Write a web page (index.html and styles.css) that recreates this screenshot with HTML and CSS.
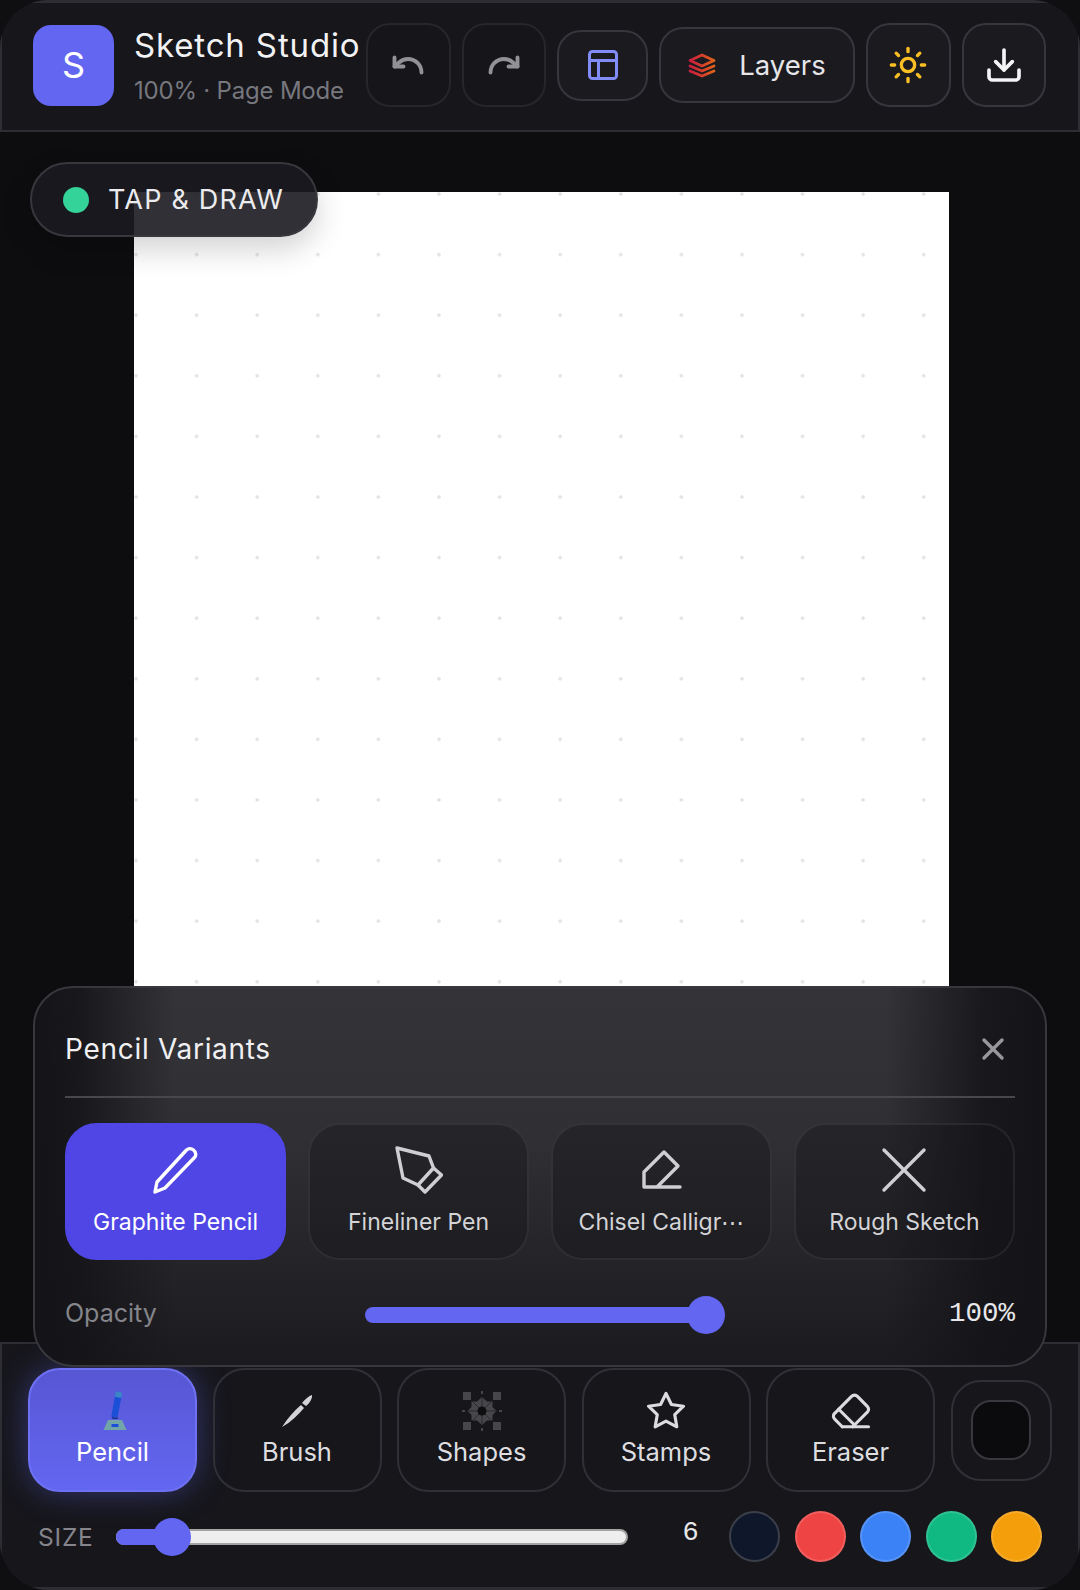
FILE: index.html
```html
<!DOCTYPE html>
<html>
<head>
  <meta charset="utf-8">
  <title>Sketch Studio</title>
  <link rel="stylesheet" href="styles.css">
</head>
<body>
  <div class="app">
    <header class="topbar">
      <div class="logo">S</div>
      <div class="brand">
        <div class="brand-title">Sketch Studio</div>
        <div class="brand-sub">100% · Page Mode</div>
      </div>
      <div class="actions">
        <button class="icon-btn is-disabled" type="button">
          <svg width="36" height="36" viewBox="0 0 24 24" class="ico" stroke="#929296" stroke-width="2.600"><path d="M3 7v6h6"/><path d="M21 17a9 9 0 0 0-9-9 9 9 0 0 0-6 2.3L3 13"/></svg>
        </button>
        <button class="icon-btn is-disabled" type="button">
          <svg width="36" height="36" viewBox="0 0 24 24" class="ico" stroke="#929296" stroke-width="2.600"><path d="M21 7v6h-6"/><path d="M3 17a9 9 0 0 1 9-9 9 9 0 0 1 6 2.3L21 13"/></svg>
        </button>
        <button class="icon-btn layout-btn" type="button">
          <svg width="36" height="36" viewBox="0 0 24 24" class="ico" stroke="#818cf8" stroke-width="2"><rect x="3" y="3" width="18" height="18" rx="2"/><path d="M3 9h18"/><path d="M9 21V9"/></svg>
        </button>
        <button class="layers-btn" type="button">
          <svg width="28" height="25" viewBox="0 0 28 25" class="ico" stroke="url(#layersGrad)" stroke-width="2.800">
            <defs>
              <linearGradient id="layersGrad" x1="0" y1="0" x2="1" y2="0">
                <stop offset="0" stop-color="#c91c3e"/>
                <stop offset="1" stop-color="#e0621a"/>
              </linearGradient>
            </defs>
            <path d="M14 2 26 7.500 14 13 2 7.500z"/>
            <path d="M2 13l12 5 12-5"/>
            <path d="M2 18l12 5 12-5"/>
          </svg>
          <span>Layers</span>
        </button>
        <button class="icon-btn" type="button">
          <svg width="40" height="40" viewBox="0 0 24 24" class="ico" stroke="#fbbf24" stroke-width="2"><circle cx="12" cy="12" r="4"/><path d="M12 2v2"/><path d="M12 20v2"/><path d="M4.9 4.9l1.4 1.4"/><path d="M17.7 17.7l1.4 1.4"/><path d="M2 12h2"/><path d="M20 12h2"/><path d="M6.3 17.7l-1.4 1.4"/><path d="M19.1 4.9l-1.4 1.4"/></svg>
        </button>
        <button class="icon-btn" type="button">
          <svg width="40" height="40" viewBox="0 0 24 24" class="ico" stroke="#f4f4f6" stroke-width="2.200"><path d="M21 15v4a2 2 0 0 1-2 2H5a2 2 0 0 1-2-2v-4"/><path d="M7 10l5 5 5-5"/><path d="M12 15V3"/></svg>
        </button>
      </div>
    </header>

    <main class="stage">
      <div class="mode-pill">
        <span class="mode-dot"></span>
        <span>TAP &amp; DRAW</span>
      </div>
      <div class="paper"></div>
    </main>

    <section class="variants">
      <div class="variants-head">
        <span class="variants-title">Pencil Variants</span>
        <svg width="24" height="24" viewBox="0 0 24 24" class="ico" stroke="#97979c" stroke-width="3.400"><path d="M3 3l18 18"/><path d="M21 3L3 21"/></svg>
      </div>
      <div class="variant-grid">
        <div class="variant is-active">
          <svg width="48" height="48" viewBox="0 0 48 48" class="ico" stroke="#fff" stroke-width="3.400"><path d="M3 46l2-10L34 4.500c2-2 5-2.500 7.500-.5s3 5.500 1 7.500L13 42z"/></svg>
          <span class="variant-label">Graphite Pencil</span>
        </div>
        <div class="variant">
          <svg width="48" height="48" viewBox="0 0 48 48" class="ico" stroke="#cfcfd1" stroke-width="3.400"><path d="M2 2l32 8 4.500 12L23 39 8 32z"/><path d="M38.500 22l8 7L30 46l-7-7"/></svg>
          <span class="variant-label">Fineliner Pen</span>
        </div>
        <div class="variant">
          <svg width="48" height="48" viewBox="0 0 48 48" class="ico" stroke="#cfcfd1" stroke-width="3.400"><path d="M42 41H6V26L26 6l14 14-21 21"/></svg>
          <span class="variant-label">Chisel Calligr⋯</span>
        </div>
        <div class="variant">
          <svg width="48" height="48" viewBox="0 0 48 48" class="ico" stroke="#cfcfd1" stroke-width="3.400"><path d="M3 4l40 40"/><path d="M43 4L3 44"/></svg>
          <span class="variant-label">Rough Sketch</span>
        </div>
      </div>
      <div class="opacity-row">
        <span class="opacity-label">Opacity</span>
        <div class="opacity-slider"><span class="opacity-thumb"></span></div>
        <span class="opacity-value">100%</span>
      </div>
    </section>

    <footer class="toolbar">
      <div class="tools">
        <div class="tool is-active">
          <svg width="42" height="42" viewBox="0 0 42 42" class="tool-icon">
            <path d="M19.500 25l4-22c.400-2 6.500-2 6.500 1l-4 21c-1 4-7.500 4-6.500 0z" fill="#1c4fd8"/>
            <path d="M23.500 3c.400-2 6.500-2 6.500 1l-.700 4-6.500-1.200z" fill="#3d86c6"/>
            <path d="M20 26c1 2.500 5 2.500 6 0l-.500 3h-5z" fill="#1a2f7a"/>
            <path d="M16 30h14l4.500 10h-23z" fill="#73a5a8"/>
            <rect x="19.500" y="34" width="7" height="3" fill="#1c4fd8"/>
          </svg>
          <span class="tool-label">Pencil</span>
        </div>
        <div class="tool">
          <svg width="42" height="42" viewBox="0 0 42 42" class="tool-icon" fill="#d4d4d6">
            <path d="M6 37c5-8 12-16 19-22l3 3c-6 7-13 14-22 19z"/>
            <path d="M26 13c3-4 7-7 10-8 .500 3-2 8-6 11z"/>
          </svg>
          <span class="tool-label">Brush</span>
        </div>
        <div class="tool">
          <svg width="42" height="42" viewBox="0 0 42 42" class="tool-icon">
            <g fill="#47474b">
              <rect x="2" y="2" width="8" height="8"/>
              <rect x="32" y="2" width="8" height="8"/>
              <rect x="2" y="32" width="8" height="8"/>
              <rect x="32" y="32" width="8" height="8"/>
              <path d="M21 7l5 4.500h5.500V17l4 4-4 4v5.500H26L21 35l-5-4.500h-5.500V25l-4-4 4-4v-5.500H16z"/>
              <rect x="20" y="1" width="2" height="3"/>
              <rect x="20" y="38" width="2" height="3"/>
              <rect x="1" y="20" width="3" height="2"/>
              <rect x="38" y="20" width="3" height="2"/>
            </g>
            <path d="M21 7v28M7 21h28M11 11l20 20M31 11L11 31" stroke="#2a2a2e" stroke-width="1"/>
            <circle cx="21" cy="21" r="4.500" fill="#0e0e11"/>
          </svg>
          <span class="tool-label">Shapes</span>
        </div>
        <div class="tool">
          <svg width="42" height="42" viewBox="0 0 24 24" class="ico tool-icon" stroke="#dcdcde" stroke-width="1.800"><path d="M12 2l3.090 6.260L22 9.270l-5 4.870 1.180 6.880L12 17.770l-6.180 3.250L7 14.140 2 9.270l6.910-1.010z"/></svg>
          <span class="tool-label">Stamps</span>
        </div>
        <div class="tool">
          <svg width="42" height="42" viewBox="0 0 24 24" class="ico tool-icon" stroke="#dcdcde" stroke-width="1.800"><path d="M7 21l-4.300-4.300c-1-1-1-2.500 0-3.400l9.600-9.600c1-1 2.500-1 3.400 0l5.600 5.600c1 1 1 2.500 0 3.400L13 21"/><path d="M22 21H7"/><path d="M5 11l9 9"/></svg>
          <span class="tool-label">Eraser</span>
        </div>
        <div class="current-color"><span class="current-chip"></span></div>
      </div>
      <div class="size-row">
        <span class="size-label">SIZE</span>
        <div class="size-slider">
          <span class="size-fill"></span>
          <span class="size-thumb"></span>
        </div>
        <span class="size-value">6</span>
        <div class="swatches">
          <span class="swatch swatch-ink"></span>
          <span class="swatch swatch-red"></span>
          <span class="swatch swatch-blue"></span>
          <span class="swatch swatch-green"></span>
          <span class="swatch swatch-amber"></span>
        </div>
      </div>
    </footer>
  </div>
</body>
</html>
```

FILE: styles.css
```css
* {
  box-sizing: border-box;
}

html,
body {
  margin: 0;
  background: #0f0f12;
}

body {
  font-family: Inter, "Liberation Sans", sans-serif;
  color: #e8e8ea;
}

button {
  font: inherit;
  color: inherit;
  padding: 0;
}

.ico {
  fill: none;
  stroke-linecap: round;
  stroke-linejoin: round;
}

/* Page shell, the round corners clip the bar borders */
.app {
  position: relative;
  width: 1080px;
  height: 1590px;
  display: flex;
  flex-direction: column;
  overflow: hidden;
  border-radius: 48px;
}

/* Top bar */
.topbar {
  height: 132px;
  flex-shrink: 0;
  display: flex;
  align-items: center;
  padding: 0 32px 3px 31px;
  background: #16161b;
  border: 2px solid #2d2d33;
  border-top-width: 3px;
}

.logo {
  width: 81px;
  height: 81px;
  display: flex;
  align-items: center;
  justify-content: center;
  border-radius: 18px;
  background: #6366f1;
  color: #fff;
  font-size: 36px;
}

.brand {
  margin-left: 20px;
}

.brand-title {
  font-size: 33px;
  line-height: 42px;
  letter-spacing: 0.85px;
  color: #f2f2f4;
}

.brand-sub {
  margin-top: 10px;
  font-size: 24px;
  line-height: 30px;
  letter-spacing: -0.2px;
  color: #77777e;
}

.actions {
  margin-left: auto;
  display: flex;
  align-items: center;
  gap: 11px;
}

.icon-btn {
  width: 84.500px;
  height: 84px;
  display: flex;
  align-items: center;
  justify-content: center;
  background: #1a1a1f;
  border: 2px solid #36363c;
  border-radius: 24px;
}

.icon-btn.is-disabled {
  background: #15151a;
  border-color: #26262b;
}

.layout-btn {
  width: 91px;
  height: 71px;
}

.layers-btn {
  width: 196px;
  height: 76px;
  display: flex;
  align-items: center;
  justify-content: center;
  gap: 23px;
  background: #1a1a1f;
  border: 2px solid #36363c;
  border-radius: 24px;
  font-size: 27.500px;
  color: #e6e6ea;
}

/* Drawing area */
.stage {
  position: relative;
  flex: 1;
  min-height: 0;
  padding-top: 60px;
  display: flex;
  justify-content: center;
  overflow: hidden;
  background: #0d0d10;
}

.paper {
  width: 815px;
  height: 1152px;
  flex-shrink: 0;
  margin-left: 3px;
  background-color: #fff;
  background-image: radial-gradient(circle at 2px 2px, #e2e2e2 1.4px, transparent 2px);
  background-size: 60.6px 60.6px;
}

.mode-pill {
  position: absolute;
  left: 30px;
  top: 30px;
  width: 288px;
  height: 75px;
  display: flex;
  align-items: center;
  gap: 19px;
  padding-left: 31px;
  background: rgba(26, 26, 32, 0.9);
  border: 2px solid #37373d;
  border-radius: 38px;
  box-shadow: 0 12px 30px rgba(0, 0, 0, 0.18);
  font-size: 27px;
  letter-spacing: 1.2px;
  color: #ececee;
}

.mode-dot {
  width: 26px;
  height: 26px;
  border-radius: 50%;
  background: #34d399;
}

/* Variants sheet, side fades stand in for the page blurred behind it */
.variants {
  position: absolute;
  z-index: 2;
  left: 33px;
  top: 986px;
  width: 1014px;
  height: 381px;
  padding: 0 30px;
  background:
    linear-gradient(90deg, #141418 0, rgba(20, 20, 24, 0.85) 45px, rgba(20, 20, 24, 0) 140px, rgba(20, 20, 24, 0) 850px, rgba(20, 20, 24, 0.85) 950px, #141418 100%),
    linear-gradient(180deg, #333338, #2f2f34 40%, #1b1b1f);
  border: 2px solid #37373d;
  border-radius: 40px;
}

.variants-head {
  height: 110px;
  display: flex;
  align-items: center;
  justify-content: space-between;
  padding-right: 10px;
  padding-top: 14px;
  border-bottom: 2px solid #47474c;
}

.variants-title {
  font-size: 28px;
  letter-spacing: 0.7px;
  color: #f0f0f2;
}

.variant-grid {
  margin-top: 25px;
  display: grid;
  grid-template-columns: repeat(4, 1fr);
  gap: 22px;
}

.variant {
  height: 137px;
  display: flex;
  flex-direction: column;
  align-items: center;
  padding-top: 21px;
  background: rgba(20, 20, 24, 0.4);
  border: 2px solid rgba(255, 255, 255, 0.07);
  border-radius: 32px;
}

.variant.is-active {
  background: #4f46e5;
  border-color: #4f46e5;
}

.variant-label {
  margin-top: 12px;
  font-size: 23px;
  line-height: 32px;
  color: #d4d4d7;
  white-space: nowrap;
}

.variant.is-active .variant-label {
  color: #fff;
}

.opacity-row {
  margin-top: 36px;
  height: 38px;
  display: flex;
  align-items: center;
}

.opacity-label {
  width: 300px;
  margin-top: -4px;
  font-size: 25px;
  color: #85858b;
}

.opacity-slider {
  position: relative;
  width: 350px;
  height: 16px;
  border-radius: 8px;
  background: #6366f1;
}

.opacity-thumb {
  position: absolute;
  right: -10px;
  top: -11px;
  width: 38px;
  height: 38px;
  border-radius: 50%;
  background: #6366f1;
}

.opacity-value {
  margin-left: auto;
  margin-top: -4px;
  font-family: "Liberation Mono", monospace;
  font-size: 27.500px;
  color: #e8e8ea;
}

/* Bottom toolbar */
.toolbar {
  height: 248px;
  flex-shrink: 0;
  padding: 24px 26px 0 26px;
  background: #16161b;
  border: 2px solid #2d2d33;
  border-bottom-width: 3px;
}

.tools {
  display: flex;
  align-items: center;
  gap: 15.500px;
}

.tool {
  width: 169px;
  height: 124px;
  display: flex;
  flex-direction: column;
  align-items: center;
  padding-top: 20px;
  border: 2px solid #303036;
  border-radius: 32px;
}

.tool.is-active {
  background: linear-gradient(180deg, #5757d4, #6366f1);
  border-color: #6e71f3;
  box-shadow: 0 0 32px rgba(99, 102, 241, 0.4);
}

.tool-icon {
  display: block;
}

.tool-label {
  margin-top: 4px;
  font-size: 25.500px;
  line-height: 32px;
  color: #dedee0;
}

.tool.is-active .tool-label {
  color: #fff;
}

.current-color {
  width: 101px;
  height: 101px;
  display: flex;
  align-items: center;
  justify-content: center;
  border: 2px solid #303036;
  border-radius: 30px;
}

.current-chip {
  width: 60px;
  height: 60px;
  background: #0b0b0d;
  border: 2px solid #38383e;
  border-radius: 20px;
}

.size-row {
  margin-top: 19px;
  height: 51px;
  padding-left: 10px;
  display: flex;
  align-items: center;
}

.size-label {
  width: 78px;
  font-size: 24.500px;
  letter-spacing: 0.8px;
  color: #85858b;
}

.size-slider {
  position: relative;
  width: 512px;
  height: 16px;
  background: #eeeeee;
  border: 2px solid #a3a3a3;
  border-left: 0;
  border-radius: 8px;
}

.size-fill {
  position: absolute;
  left: 0;
  top: -2px;
  width: 50px;
  height: 16px;
  background: #6366f1;
  border-radius: 8px 0 0 8px;
}

.size-thumb {
  position: absolute;
  left: 37px;
  top: -13px;
  width: 38px;
  height: 38px;
  border-radius: 50%;
  background: #6366f1;
}

.size-value {
  width: 101px;
  padding-left: 24px;
  margin-top: -8px;
  text-align: center;
  font-family: "Liberation Mono", monospace;
  font-size: 27px;
  color: #e8e8ea;
}

.swatches {
  display: flex;
  gap: 14.600px;
}

.swatch {
  width: 51px;
  height: 51px;
  border-radius: 50%;
  border: 2px solid rgba(255, 255, 255, 0.14);
}

.swatch-ink {
  background: #0f172a;
  border-color: #3a3f4a;
}

.swatch-red {
  background: #ef4444;
}

.swatch-blue {
  background: #3b82f6;
}

.swatch-green {
  background: #10b981;
}

.swatch-amber {
  background: #f59e0b;
}
```
